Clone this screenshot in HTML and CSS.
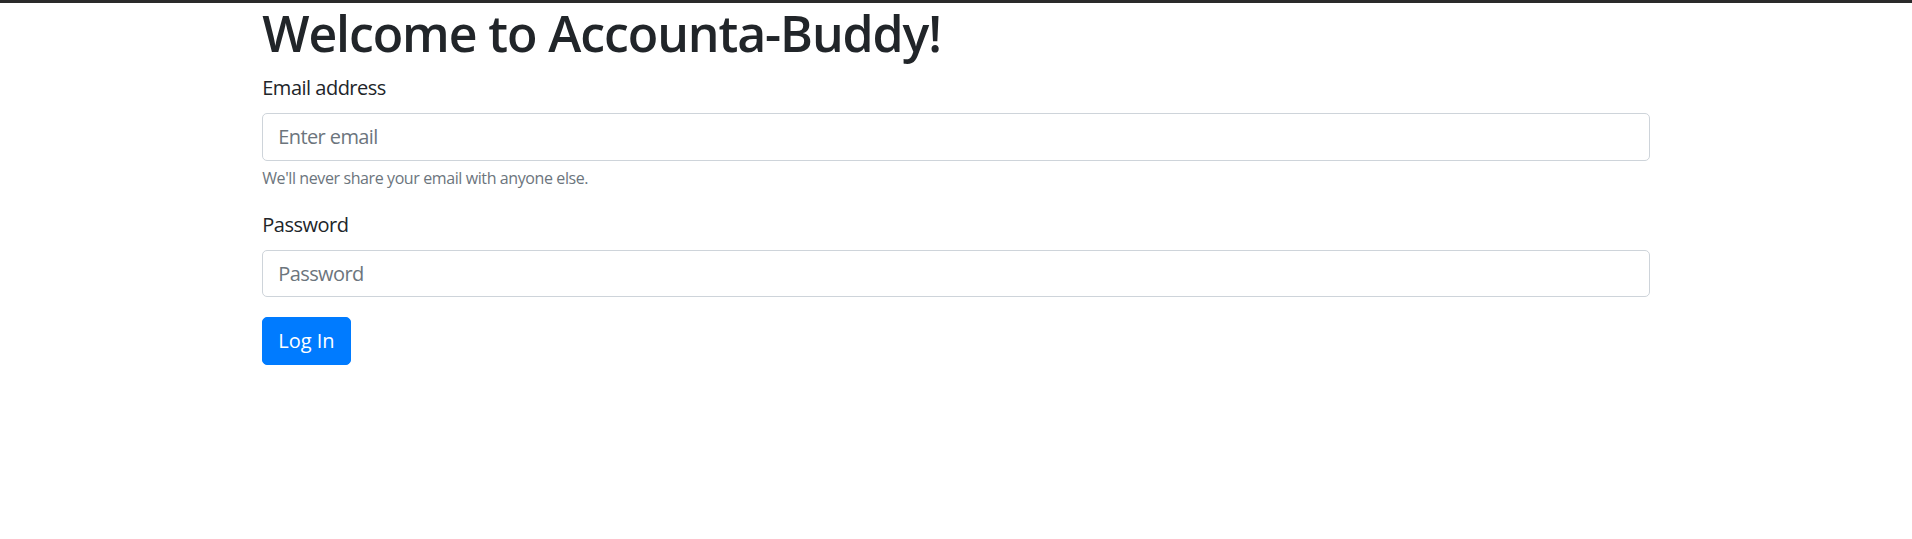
FILE: index.html
```html
<!DOCTYPE html>
<html lang="en">
<head>
<meta charset="utf-8">
<title>Accounta-Buddy</title>
<link rel="stylesheet" href="styles.css">
</head>
<body>
<div class="topbar"></div>
<div class="container">
  <h1 class="title">Welcome to Accounta-Buddy!</h1>
  <form class="form">
    <div class="form-group">
      <label class="label" for="email">Email address</label>
      <input class="input" type="email" id="email" placeholder="Enter email">
      <small class="help">We'll never share your email with anyone else.</small>
    </div>
    <div class="form-group">
      <label class="label" for="password">Password</label>
      <input class="input" type="password" id="password" placeholder="Password">
    </div>
    <button class="btn" type="button">Log In</button>
  </form>
</div>
</body>
</html>
```
FILE: styles.css
```css
* { box-sizing: border-box; }
html, body { margin: 0; padding: 0; background: #fff; }
body {
  font-family: "Segoe UI", "Open Sans", "Noto Sans", sans-serif;
  font-size: 20px;
  line-height: 1.5;
  color: #212529;
  letter-spacing: -0.5px;
}
.topbar { height: 3px; background: #2a2a2a; }
.container {
  width: 1425px;
  margin: 0 auto;
  padding: 0 18.75px;
}
.title {
  margin: 0 0 10px;
  font-size: 50px;
  font-weight: 600;
  line-height: 1.2;
  letter-spacing: -1.1px;
}
.form-group { margin-bottom: 20px; }
.label {
  display: inline-block;
  margin-bottom: 10px;
}
.input {
  display: block;
  width: 100%;
  height: 47.5px;
  padding: 7.5px 15px;
  font-family: inherit;
  font-size: 20px;
  line-height: 1.5;
  letter-spacing: -0.6px;
  color: #495057;
  background: #fff;
  border: 1.25px solid #ced4da;
  border-radius: 5px;
  outline: none;
}
.input::placeholder { color: #6c757d; opacity: 1; }
.help {
  display: block;
  margin-top: 5px;
  font-size: 16px;
  letter-spacing: -0.4px;
  color: #6c757d;
}
.btn {
  display: inline-block;
  height: 47.5px;
  padding: 7.5px 15px;
  font-family: inherit;
  font-size: 20px;
  line-height: 1.5;
  letter-spacing: 0;
  color: #fff;
  background: #007bff;
  border: 1.25px solid #007bff;
  border-radius: 5px;
  cursor: pointer;
}
```
